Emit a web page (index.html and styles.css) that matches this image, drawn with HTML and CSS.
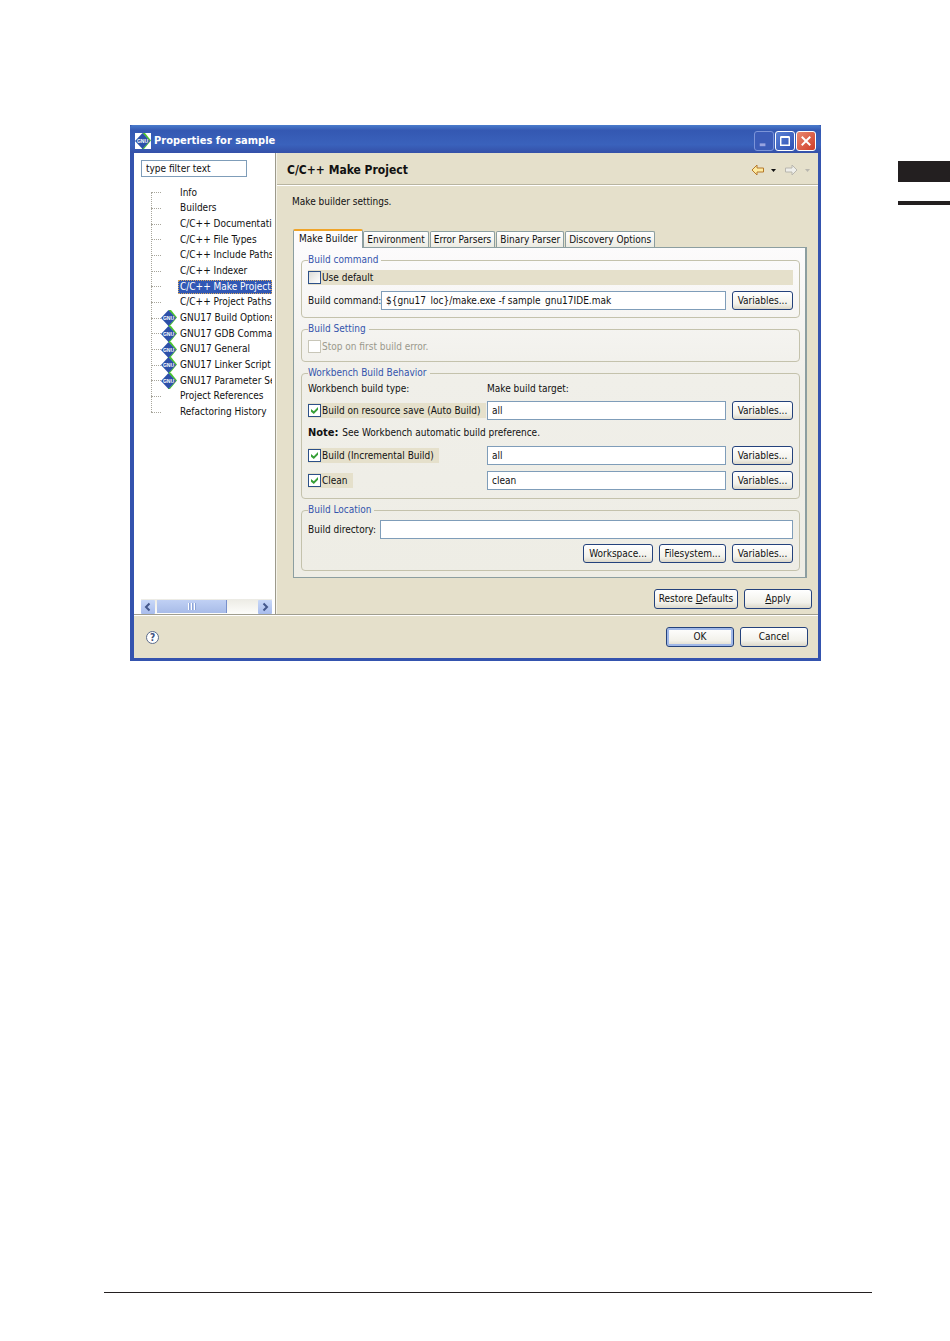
FILE: index.html
```html
<!DOCTYPE html>
<html lang="en">
<head>
  <meta charset="UTF-8">
  <meta name="viewport" content="width=device-width, initial-scale=1.0">
  <title>Properties for sample</title>
  <link rel="stylesheet" href="styles.css">
</head>
<body>
  <!-- shared icon -->
  <svg class="defs" aria-hidden="true">
    <symbol id="gnu" viewBox="0 0 16 16">
      <path d="M8 0h2l6 7.500L9 16H7z" fill="#4cc82c"/>
      <path d="M8 1l6.500 7L8 15z" fill="#fff"/>
      <path d="M0 8l7.500-8L15 8l-7.500 8z" fill="#2c50a8"/>
      <text x="7.500" y="10" text-anchor="middle" fill="#fff">GNU</text>
    </symbol>
  </svg>

  <div class="sheet">
    <main class="dialog">
      <header class="titlebar">
        <svg class="app-icon"><rect width="16" height="16" fill="#fff"/><use href="#gnu"/></svg>
        <h1>Properties for sample</h1>
        <button class="win-btn minimize" disabled aria-label="Minimize"><svg viewBox="0 0 19 19"><path d="M5 12h6v3H5z" fill="#98a4e0"/></svg></button>
        <button class="win-btn" aria-label="Maximize"><svg viewBox="0 0 19 19"><path d="M5 5.500h9V14H5zM5 5h9" fill="none" stroke="#fff" stroke-width="1.500"/></svg></button>
        <button class="win-btn close" aria-label="Close"><svg viewBox="0 0 19 19"><path d="M5 5l9 9M14 5l-9 9" stroke="#fff" stroke-width="2"/></svg></button>
      </header>

      <div class="content">
        <nav class="sidebar">
          <input class="filter" type="text" value="type filter text" aria-label="Filter">
          <ul class="tree">
            <li><a href="#">Info</a></li>
            <li><a href="#">Builders</a></li>
            <li><a href="#">C/C++ Documentation</a></li>
            <li><a href="#">C/C++ File Types</a></li>
            <li><a href="#">C/C++ Include Paths</a></li>
            <li><a href="#">C/C++ Indexer</a></li>
            <li><a href="#" class="selected">C/C++ Make Project</a></li>
            <li><a href="#">C/C++ Project Paths</a></li>
            <li><svg><use href="#gnu"/></svg><a href="#">GNU17 Build Options</a></li>
            <li><svg><use href="#gnu"/></svg><a href="#">GNU17 GDB Commands</a></li>
            <li><svg><use href="#gnu"/></svg><a href="#">GNU17 General</a></li>
            <li><svg><use href="#gnu"/></svg><a href="#">GNU17 Linker Script Settings</a></li>
            <li><svg><use href="#gnu"/></svg><a href="#">GNU17 Parameter Settings</a></li>
            <li><a href="#">Project References</a></li>
            <li><a href="#">Refactoring History</a></li>
          </ul>
          <div class="scrollbar">
            <button aria-label="Scroll left"><svg viewBox="0 0 14 14"><path d="M8.500 3.500L5 7l3.500 3.500" fill="none" stroke="#44588c" stroke-width="2"/></svg></button>
            <div class="thumb"><i></i><i></i><i></i></div>
            <button aria-label="Scroll right"><svg viewBox="0 0 14 14"><path d="M5.500 3.500L9 7l-3.500 3.500" fill="none" stroke="#44588c" stroke-width="2"/></svg></button>
          </div>
        </nav>

        <section class="page">
          <div class="page-head">
            <h2>C/C++ Make Project</h2>
            <button class="nav-btn" aria-label="Back"><svg width="13" height="12" viewBox="0 0 13 12"><path d="M1 6l5-5v3h6.500v4H6v3z" fill="#fdeaa0" stroke="#b5792a"/></svg></button>
            <button class="nav-btn" aria-label="Back history"><svg width="5" height="3" viewBox="0 0 5 3"><path d="M0 0h5L2.500 3z" fill="#111"/></svg></button>
            <button class="nav-btn forward" disabled aria-label="Forward"><svg width="13" height="12" viewBox="0 0 13 12"><path d="M12 6L7 1v3H.5v4H7v3z" fill="#eeeeea" stroke="#b8b6ae"/></svg></button>
            <button class="nav-btn" disabled aria-label="Forward history"><svg width="5" height="3" viewBox="0 0 5 3"><path d="M0 0h5L2.500 3z" fill="#b8b6ae"/></svg></button>
          </div>

          <p class="intro">Make builder settings.</p>

          <div class="tabs" role="tablist">
            <button class="active" role="tab" aria-selected="true">Make Builder</button>
            <button role="tab">Environment</button>
            <button role="tab">Error Parsers</button>
            <button role="tab">Binary Parser</button>
            <button role="tab">Discovery Options</button>
          </div>

          <div class="tab-panel">
            <fieldset>
              <legend>Build command</legend>
              <label class="check"><input type="checkbox">Use default</label>
              <div class="row">
                <label class="command-label" for="command">Build command:</label>
                <input type="text" id="command" value="${gnu17_loc}/make.exe -f sample_gnu17IDE.mak">
                <button class="btn variables">Variables...</button>
              </div>
            </fieldset>

            <fieldset>
              <legend>Build Setting</legend>
              <label class="check off"><input type="checkbox" disabled>Stop on first build error.</label>
            </fieldset>

            <fieldset>
              <legend>Workbench Build Behavior</legend>
              <div class="behavior">
                <span>Workbench build type:</span>
                <span class="target">Make build target:</span>
                <label class="check"><input type="checkbox" checked>Build on resource save (Auto Build)</label>
                <input type="text" value="all" aria-label="Auto build target">
                <button class="btn">Variables...</button>
                <p class="note"><b>Note:</b> See Workbench automatic build preference.</p>
                <label class="check"><input type="checkbox" checked>Build (Incremental Build)</label>
                <input type="text" value="all" aria-label="Incremental build target">
                <button class="btn">Variables...</button>
                <label class="check"><input type="checkbox" checked>Clean</label>
                <input type="text" value="clean" aria-label="Clean target">
                <button class="btn">Variables...</button>
              </div>
            </fieldset>

            <fieldset>
              <legend>Build Location</legend>
              <div class="row">
                <label class="directory-label" for="directory">Build directory:</label>
                <input type="text" id="directory">
              </div>
              <div class="row locations">
                <button class="btn workspace">Workspace...</button>
                <button class="btn filesystem">Filesystem...</button>
                <button class="btn variables">Variables...</button>
              </div>
            </fieldset>
          </div>

          <div class="page-actions">
            <button class="btn restore">Restore <u>D</u>efaults</button>
            <button class="btn wide"><u>A</u>pply</button>
          </div>
        </section>
      </div>

      <footer class="actions">
        <button class="help" aria-label="Help">?</button>
        <button class="btn wide default">OK</button>
        <button class="btn wide">Cancel</button>
      </footer>
    </main>

    <div class="marks">
      <div class="mark thick"></div>
      <div class="mark thin"></div>
    </div>
  </div>

  <hr class="foot-rule">
</body>
</html>
```

FILE: styles.css
```css
* { box-sizing: border-box; }
body { margin: 0; min-height: 100vh; display: flex; flex-direction: column; background: #fff; color: #111; font: 10px/12px "DejaVu Sans Condensed", "DejaVu Sans", sans-serif; }
h1, h2, p, ul { margin: 0; padding: 0; }
button, input { font: inherit; color: inherit; margin: 0; padding: 0; }
a { color: inherit; text-decoration: none; }
.defs { display: none; }
symbol text { font: bold 5px "Liberation Sans", sans-serif; }

.sheet { display: grid; grid-template-columns: 130px minmax(0, 1fr) 129px; padding-top: 125px; }
.dialog { grid-column: 2; background: #e5e0cb; border: solid #3453ae; border-width: 0 3px 3px 4px; }

/* page edge marks and bottom rule */
.marks { padding: 36px 0 0 77px; }
.mark { background: #231f20; }
.thick { height: 21px; margin-bottom: 19px; }
.thin { height: 4px; }
.foot-rule { width: auto; margin: auto 78px 48px 104px; border: 0; border-top: 1px solid #231f20; align-self: stretch; }

/* title bar */
.titlebar { height: 28px; margin: 0 -3px 0 -4px; padding: 4px 5px 0; display: flex; align-items: center; gap: 1px; background: linear-gradient(#4a7ccc, #3458b2 20%, #3a62bc 70%, #3450a8); color: #fff; border-radius: 3px 3px 0 0; }
.app-icon { width: 16px; height: 16px; margin-right: 2px; }
.titlebar h1 { flex: 1; font-size: 11px; font-weight: bold; }
.win-btn { width: 20px; height: 20px; border: 1px solid #fff; border-radius: 3px; background: linear-gradient(135deg, #5a80d4, #2c50b4); }
.win-btn svg { display: block; width: 18px; height: 18px; }
.win-btn.minimize { border-color: #7c94d8; background: #3c5cb8; }
.win-btn.close { background: linear-gradient(135deg, #e88870, #d03c28); }

.content { display: flex; border-bottom: 1px solid #a09e90; }

/* category tree */
.sidebar { width: 142px; flex: none; display: flex; flex-direction: column; background: #fff; border-right: 1px solid #9c9a8c; padding: 7px 3px 0 7px; }
input[type="text"] { height: 19px; min-width: 0; border: 1px solid #7f9db9; background: #fff; padding: 0 4px; }
.sidebar .filter { width: 106px; height: 17px; }
.tree { height: 235px; margin-top: 8px; padding-left: 10px; display: grid; grid-template-rows: repeat(15, minmax(0, 1fr)); list-style: none; overflow: hidden; background: repeating-linear-gradient(#a8a69c 0 1px, #fff 1px 2px) 10px 8px / 1px 220px no-repeat; }
.tree li { display: flex; align-items: center; min-width: 0; white-space: nowrap; }
.tree li::before { content: ""; width: 10px; flex: none; border-top: 1px dotted #a8a69c; }
.tree svg { width: 16px; height: 16px; flex: none; }
.tree a { flex: 1; min-width: 0; overflow: hidden; line-height: 14px; padding-left: 2px; margin-left: 17px; }
.tree svg + a { margin-left: 1px; }
.tree .selected { background: #3158b4; color: #fff; outline: 1px dotted #d8a860; outline-offset: -1px; }

.scrollbar { margin-top: auto; height: 15px; display: flex; background: linear-gradient(#ecebe4, #fdfdfb); }
.scrollbar button { width: 14px; height: 14px; margin-top: 1px; border: 0; border-radius: 1px; background: linear-gradient(#c8d8f8, #a8bcec); }
.scrollbar button svg { display: block; }
.scrollbar button:last-child { margin-left: auto; }
.thumb { width: 70px; height: 13px; margin: 1px 0 0 2px; display: flex; justify-content: center; align-items: center; gap: 1px; background: linear-gradient(#c0d0f4, #a8bce8); border-right: 1px solid #7890cc; }
.thumb i { width: 2px; height: 7px; border-left: 1px solid #fff; background: #8ca4d8; }

/* settings page */
.page { flex: 1; min-width: 0; border-left: 1px solid #f4f2e8; }
.page-head { height: 33px; padding: 2px 8px 0 10px; display: flex; align-items: center; border-bottom: 1px solid #fff; box-shadow: inset 0 -1px #b8b4a0; }
.page-head h2 { flex: 1; font-size: 12px; font-weight: bold; }
.nav-btn { border: 0; background: none; display: flex; margin-left: 7px; }
.nav-btn.forward { margin-left: 9px; }
.intro { padding: 10px 15px 0; }
.tabs { display: flex; align-items: flex-end; margin: 21px 0 0 16px; }
.tabs button { height: 16px; margin-right: 1px; padding: 0 3px; border: 1px solid #8c9ea0; border-bottom: 0; border-radius: 2px 2px 0 0; background: linear-gradient(#fff, #ecebe2); white-space: nowrap; }
.tabs .active { height: 19px; margin: 0 0 -1px; padding: 0 5px 2px; position: relative; border-top: 2px solid #f0a428; background: #fcfbfc; }
.tab-panel { margin: 0 11px 0 16px; padding: 6px 5px 6px 7px; border: 1px solid #8c9ea0; border-right-width: 2px; background: linear-gradient(#fcfbfc, #f0efe9 40%, #eeede5); }

fieldset { min-width: 0; margin: 0 0 5px; padding: 4px 6px 7px; border: 1px solid #c4c2ac; border-radius: 4px; }
fieldset:last-child { margin-bottom: 0; }
legend { padding: 0 3px 0 0; color: #3454ac; }
.check { display: flex; align-items: center; height: 15px; padding-right: 5px; background: #e5e0cb; white-space: nowrap; }
.check.off { background: none; color: #9a988c; }
.check input { appearance: none; width: 13px; height: 13px; margin-right: 1px; border: 1px solid #2c5088; background: linear-gradient(135deg, #dcdcd6, #fff); }
.check input:checked { background: #fff; }
.check input:checked::before { content: ""; display: block; width: 7px; height: 7px; margin: 2px; background: #38a038; clip-path: polygon(0 30%, 40% 62%, 100% 0, 100% 38%, 40% 100%, 0 68%); }
.check input:disabled { border-color: #c8c6b8; background: #fff; }

.row { display: flex; align-items: center; gap: 6px; }
.row input { flex: 1; }
.check + .row { margin-top: 6px; }
.command-label { width: 67px; white-space: nowrap; }
.directory-label { width: 66px; white-space: nowrap; }
.locations { margin-top: 5px; justify-content: flex-end; }

.behavior { display: grid; grid-template-columns: 173px minmax(0, 1fr) 61px; gap: 6px; align-items: center; padding-bottom: 1px; }
.behavior .check { justify-self: start; }
.target { grid-column: 2 / 4; }
.note { grid-column: 1 / 4; line-height: 14px; }
.note b { font-size: 11px; margin-right: 1px; }

.btn { height: 19px; border: 1px solid #24427c; border-radius: 3px; background: linear-gradient(#fff, #f2f1ea 70%, #dcd8ca); white-space: nowrap; }
.variables { width: 61px; }
.workspace { width: 70px; }
.filesystem { width: 67px; }
.restore { width: 84px; }
.wide { width: 68px; }
.default { box-shadow: inset 0 0 0 2px #a0b8e8; }
.page-actions { display: flex; justify-content: flex-end; gap: 6px; padding: 11px 6px 5px; }
.page-actions .btn, .actions .btn { height: 20px; }

.actions { height: 43px; display: flex; align-items: center; gap: 6px; padding: 0 10px 0 12px; border-top: 1px solid #fff; }
.help { width: 13px; height: 13px; margin-right: auto; border: 1px solid #5c6c8c; border-radius: 50%; background: #fff; color: #3c5080; font-weight: bold; line-height: 11px; }
```
